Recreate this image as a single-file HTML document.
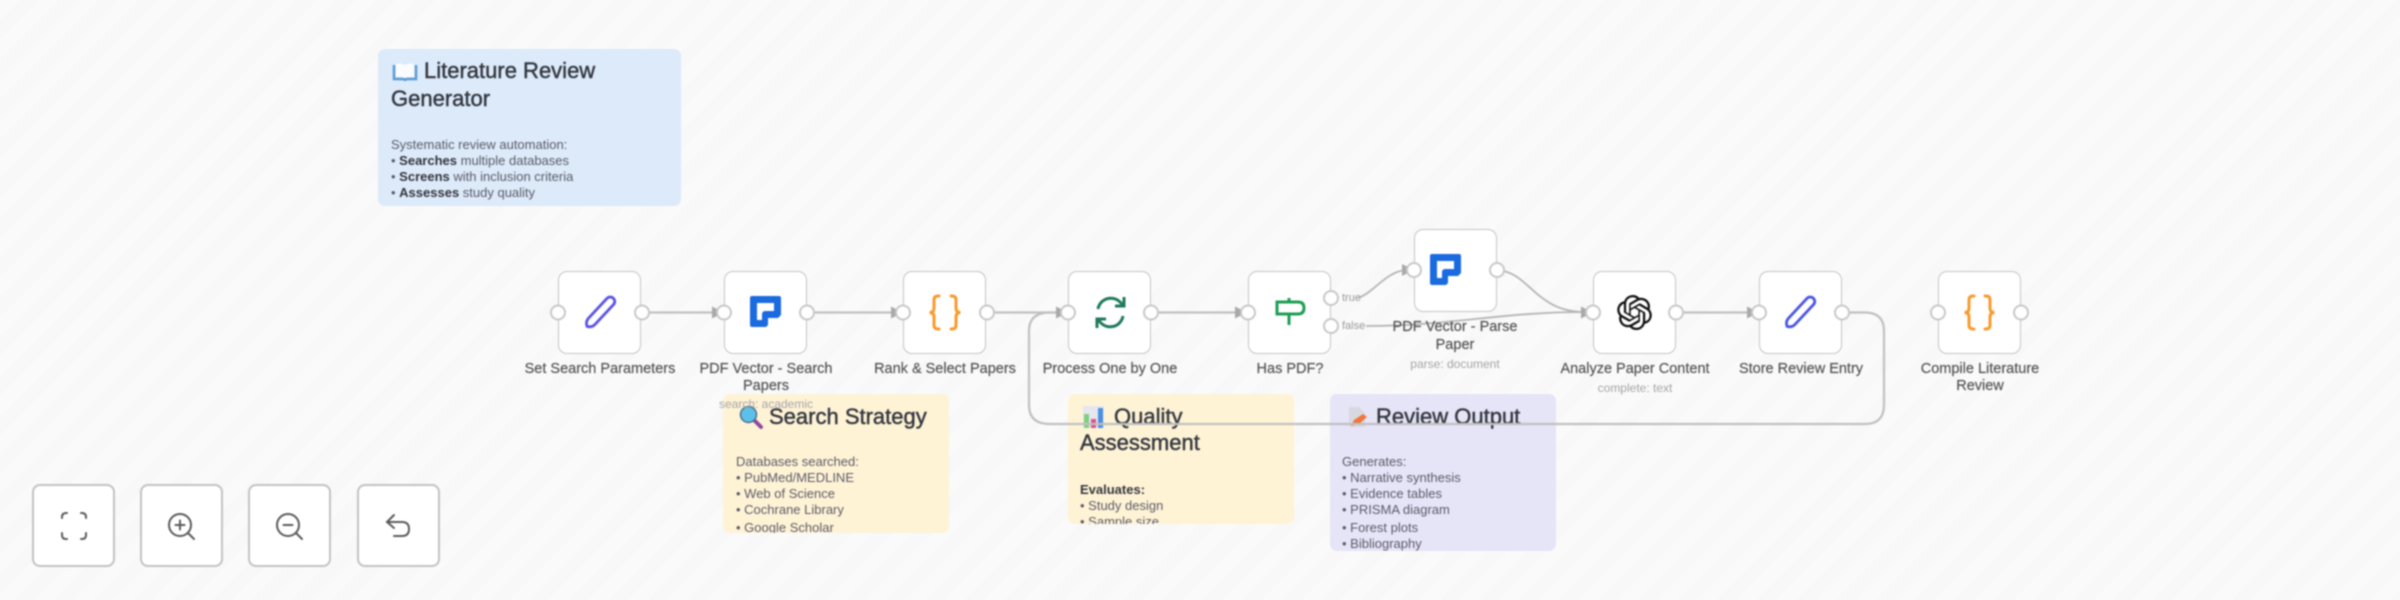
<!DOCTYPE html>
<html><head><meta charset="utf-8"><style>
html,body{margin:0;padding:0;width:2400px;height:600px;overflow:hidden;background:#f9f9f9}
#r{position:absolute;left:0;top:0;width:2400px;height:600px;overflow:hidden;font-family:"Liberation Sans",sans-serif;filter:blur(.8px);background:repeating-linear-gradient(135deg,#fafafa 0 14px,#f8f8f8 14px 28px)}
.s{position:absolute;border-radius:7px;overflow:hidden}
.s div{position:absolute;white-space:nowrap}
.t{font-size:22px;line-height:28px;color:#33373f;font-weight:500;-webkit-text-stroke:.45px #33373f}
.b{font-size:13px;line-height:16px;color:#5a5a66}
.b b{color:#33333c}
.n{position:absolute;width:81px;height:81px;background:#fff;border:1.5px solid #c4c4c4;border-radius:9px;box-sizing:content-box}
.l{position:absolute;width:170px;text-align:center;font-size:14.5px;line-height:17px;color:#555;-webkit-text-stroke:.2px #555}
.u{position:absolute;width:170px;text-align:center;font-size:12px;line-height:14px;color:#a5a5a5}
.f{position:absolute;font-size:11px;line-height:12px;color:#999}
.c{position:absolute;width:83px;height:83px;box-sizing:border-box;background:#fff;border:2px solid #c2c2c2;border-radius:8px}
svg{position:absolute;overflow:visible}
</style></head><body><div id="r">
<div class="s" style="left:378px;top:49px;width:303px;height:157px;background:#dceafa">
<svg style="left:15px;top:13px" width="24" height="20" viewBox="0 0 24 20"><path d="M1 3v14h9q2 0 2 2 0-2 2-2h9V3" fill="none" stroke="#5b9bd5" stroke-width="2.500"/><path d="M3 2q5-1 9 1 4-2 9-1v13q-5-1-9 1-4-2-9-1z" fill="#fbfcff"/></svg>
<div class="t" style="left:46px;top:8px">Literature Review</div>
<div class="t" style="left:13px;top:36px">Generator</div>
<div class="b" style="left:13px;top:88px">Systematic review automation:</div>
<div class="b" style="left:13px;top:104px">• <b>Searches</b> multiple databases</div>
<div class="b" style="left:13px;top:120px">• <b>Screens</b> with inclusion criteria</div>
<div class="b" style="left:13px;top:136px">• <b>Assesses</b> study quality</div>
</div>
<div class="s" style="left:723px;top:394px;width:226px;height:139px;background:#fff3d6">
<svg style="left:16px;top:11px" width="24" height="24" viewBox="0 0 24 24"><path d="M15 15l7 7" stroke="#8e4a9e" stroke-width="4" stroke-linecap="round"/><circle cx="9.500" cy="9.500" r="8" fill="#5cc0e8" stroke="#4a6f8f" stroke-width="1.500"/></svg>
<div class="t" style="left:46px;top:9px">Search Strategy</div>
<div class="b" style="left:13px;top:60px">Databases searched:</div>
<div class="b" style="left:13px;top:76px">• PubMed/MEDLINE</div>
<div class="b" style="left:13px;top:92px">• Web of Science</div>
<div class="b" style="left:13px;top:108px">• Cochrane Library</div>
<div class="b" style="left:13px;top:126px">• Google Scholar</div>
</div>
<div class="s" style="left:1068px;top:394px;width:226px;height:130px;background:#fff3d6">
<svg style="left:15px;top:12px" width="21" height="22" viewBox="0 0 21 22"><rect width="21" height="22" fill="#e6e6ee"/><rect x="1" y="8" width="5" height="14" fill="#7ed07e"/><rect x="8" y="13" width="5" height="9" fill="#e0508c"/><rect x="15" y="2" width="5" height="20" fill="#4a90e2"/></svg>
<div class="t" style="left:46px;top:9px">Quality</div>
<div class="t" style="left:12px;top:35px">Assessment</div>
<div class="b" style="left:12px;top:88px"><b>Evaluates:</b></div>
<div class="b" style="left:12px;top:104px">• Study design</div>
<div class="b" style="left:12px;top:120px">• Sample size</div>
</div>
<div class="s" style="left:1330px;top:394px;width:226px;height:157px;background:#e6e4f7">
<svg style="left:18px;top:12px" width="20" height="22" viewBox="0 0 20 22"><path d="M1 1h10l6 6v14H1z" fill="#d9d8e2"/><path d="M3 20l3-6 9-6 4 3-8 7z" fill="#f0763a"/></svg>
<div class="t" style="left:46px;top:9px">Review Output</div>
<div class="b" style="left:12px;top:60px">Generates:</div>
<div class="b" style="left:12px;top:76px">• Narrative synthesis</div>
<div class="b" style="left:12px;top:92px">• Evidence tables</div>
<div class="b" style="left:12px;top:108px">• PRISMA diagram</div>
<div class="b" style="left:12px;top:126px">• Forest plots</div>
<div class="b" style="left:12px;top:142px">• Bibliography</div>
</div>

<svg style="left:0;top:0" width="2400" height="600" viewBox="0 0 2400 600" fill="none">
<g stroke="#c0c0c0" stroke-width="2.200">
<path d="M642 312.500H716"/><path d="M808 312.500H895"/><path d="M987 312.500H1060"/><path d="M1151 312.500H1240"/><path d="M1680 312.500H1752"/>
<path d="M1842 312.500H1865Q1884 312.500 1884 331V405Q1884 424 1865 424H1050Q1029 424 1029 405V331Q1029 312.500 1050 312.500H1060"/>
</g>
<g stroke="#b5b5b5" stroke-width="1.800">
<path d="M1358 298C1375 292 1385 272 1406 270"/>
<path d="M1497 270C1530 272 1535 312 1585 312"/>
<path d="M1366 326C1450 326 1500 312 1585 312"/>
</g>
<g fill="#a9a9a9"><path d="M724 312.500l-12-6v12z"/><path d="M903 312.500l-12-6v12z"/><path d="M1068 312.500l-12-6v12z"/><path d="M1247 312.500l-12-6v12z"/><path d="M1414 270l-12-6v12z"/><path d="M1593 312.500l-12-6v12z"/><path d="M1759 312.500l-12-6v12z"/></g>
</svg>

<div class="n" style="left:558px;top:271px"></div>
<div class="n" style="left:724px;top:271px"></div>
<div class="n" style="left:903px;top:271px"></div>
<div class="n" style="left:1068px;top:271px"></div>
<div class="n" style="left:1248px;top:271px"></div>
<div class="n" style="left:1414px;top:229px"></div>
<div class="n" style="left:1593px;top:271px"></div>
<div class="n" style="left:1759px;top:271px"></div>
<div class="n" style="left:1938px;top:271px"></div>

<svg style="left:0;top:0" width="2400" height="600" viewBox="0 0 2400 600" fill="none">
<g fill="#fff" stroke="#c8c8c8" stroke-width="2">
<circle cx="558" cy="312.500" r="7"/><circle cx="642" cy="312.500" r="7"/>
<circle cx="724" cy="312.500" r="7"/><circle cx="807" cy="312.500" r="7"/>
<circle cx="903" cy="312.500" r="7"/><circle cx="987" cy="312.500" r="7"/>
<circle cx="1068" cy="312.500" r="7"/><circle cx="1151" cy="312.500" r="7"/>
<circle cx="1248" cy="312.500" r="7"/><circle cx="1331" cy="298" r="7"/><circle cx="1331" cy="326" r="7"/>
<circle cx="1414" cy="270" r="7"/><circle cx="1497" cy="270" r="7"/>
<circle cx="1593" cy="312.500" r="7"/><circle cx="1676" cy="312.500" r="7"/>
<circle cx="1759" cy="312.500" r="7"/><circle cx="1842" cy="312.500" r="7"/>
<circle cx="1938" cy="312.500" r="7"/><circle cx="2021" cy="312.500" r="7"/>
</g>
<path d="M-19 0C-17-4-14-4.500-12-4.500H15a4.500 4.500 0 0 1 0 9H-12C-14 4.500-17 4-19 0Z" transform="translate(600 312.500) rotate(-47)" stroke="#5a52e6" stroke-width="2.800"/>
<path d="M-19 0C-17-4-14-4.500-12-4.500H15a4.500 4.500 0 0 1 0 9H-12C-14 4.500-17 4-19 0Z" transform="translate(1800 312.500) rotate(-47)" stroke="#4a55e4" stroke-width="2.800"/>
<g fill="#1a6ae0" fill-rule="evenodd">
<path id="v" d="M752 296H779a2 2 0 0 1 2 2V315l-3 3H768V325l-2 2H752a2 2 0 0 1-2-2V298a2 2 0 0 1 2-2ZM757 303V320H762V314a3 3 0 0 1 3-3H774V303Z"/>
<path d="M1432 254H1459a2 2 0 0 1 2 2V273l-3 3H1448V283l-2 2H1432a2 2 0 0 1-2-2V256a2 2 0 0 1 2-2ZM1437 261V278H1442V272a3 3 0 0 1 3-3H1454V261Z"/>
</g>
<g stroke="#f99a2c" stroke-width="3" stroke-linecap="round">
<path d="M939 296h-1q-4 0-4 4v8q0 4.500-4.500 4.500 4.500 0 4.500 4.500v8q0 4 4 4h1"/><path d="M951 296h1q4 0 4 4v8q0 4.500 4.500 4.500-4.500 0-4.500 4.500v8q0 4-4 4h-1"/>
<path d="M1974 296h-1q-4 0-4 4v8q0 4.500-4.500 4.500 4.500 0 4.500 4.500v8q0 4 4 4h1"/><path d="M1985 296h1q4 0 4 4v8q0 4.500 4.500 4.500-4.500 0-4.500 4.500v8q0 4-4 4h-1"/>
</g>
<g stroke="#1f7a5c" stroke-width="3">
<path d="M1098 309a13 13 0 0 1 22-7l4 4"/><path d="M1124 297v9h-9"/>
<path d="M1123 316a13 13 0 0 1-22 7l-4-4"/><path d="M1097 328v-9h9"/>
</g>
<g stroke="#1f9d55" stroke-width="3">
<path d="M1277 302h21q6 0 6 6t-6 6h-21z"/><path d="M1289 302v-4M1289 314v11"/>
</g>
<path transform="translate(1617 295) scale(1.46)" fill="#111" d="M22.2819 9.8211a5.9847 5.9847 0 0 0-.5157-4.9108 6.0462 6.0462 0 0 0-6.5098-2.9A6.0651 6.0651 0 0 0 4.9807 4.1818a5.9847 5.9847 0 0 0-3.9977 2.9 6.0462 6.0462 0 0 0 .7427 7.0966 5.98 5.98 0 0 0 .511 4.9107 6.051 6.051 0 0 0 6.5146 2.9001A5.9847 5.9847 0 0 0 13.2599 24a6.0557 6.0557 0 0 0 5.7718-4.2058 5.9894 5.9894 0 0 0 3.9977-2.9001 6.0557 6.0557 0 0 0-.7475-7.0729zm-9.022 12.6081a4.4755 4.4755 0 0 1-2.8764-1.0408l.1419-.0804 4.7783-2.7582a.7948.7948 0 0 0 .3927-.6813v-6.7369l2.02 1.1686a.071.071 0 0 1 .038.052v5.5826a4.504 4.504 0 0 1-4.4945 4.4944zm-9.6607-4.1254a4.4708 4.4708 0 0 1-.5346-3.0137l.142.0852 4.783 2.7582a.7712.7712 0 0 0 .7806 0l5.8428-3.3685v2.3324a.0804.0804 0 0 1-.0332.0615L9.74 19.9502a4.4992 4.4992 0 0 1-6.1408-1.6464zM2.3408 7.8956a4.485 4.485 0 0 1 2.3655-1.9728V11.6a.7664.7664 0 0 0 .3879.6765l5.8144 3.3543-2.0201 1.1685a.0757.0757 0 0 1-.071 0l-4.8303-2.7865A4.504 4.504 0 0 1 2.3408 7.872zm16.5963 3.8558L13.1038 8.364 15.1192 7.2a.0757.0757 0 0 1 .071 0l4.8303 2.7913a4.4944 4.4944 0 0 1-.6765 8.1042v-5.6772a.79.79 0 0 0-.407-.667zm2.0107-3.0231l-.142-.0852-4.7735-2.7818a.7759.7759 0 0 0-.7854 0L9.409 9.2297V6.8974a.0662.0662 0 0 1 .0284-.0615l4.8303-2.7866a4.4992 4.4992 0 0 1 6.6802 4.66zM8.3065 12.863l-2.02-1.1638a.0804.0804 0 0 1-.038-.0567V6.0742a4.4992 4.4992 0 0 1 7.3757-3.4537l-.142.0805L8.704 5.459a.7948.7948 0 0 0-.3927.6813zm1.0976-2.3654l2.602-1.4998 2.6069 1.4998v2.9994l-2.5974 1.4997-2.6067-1.4997Z"/>
</svg>

<div class="f" style="left:1342px;top:292px">true</div>
<div class="f" style="left:1342px;top:320px">false</div>

<div class="l" style="left:515px;top:361px">Set Search Parameters</div>
<div class="l" style="left:681px;top:361px">PDF Vector - Search<br>Papers</div>
<div class="l" style="left:860px;top:361px">Rank &amp; Select Papers</div>
<div class="l" style="left:1025px;top:361px">Process One by One</div>
<div class="l" style="left:1205px;top:361px">Has PDF?</div>
<div class="l" style="left:1370px;top:318px;line-height:18px">PDF Vector - Parse<br>Paper</div>
<div class="l" style="left:1550px;top:361px">Analyze Paper Content</div>
<div class="l" style="left:1716px;top:361px">Store Review Entry</div>
<div class="l" style="left:1895px;top:361px">Compile Literature<br>Review</div>
<div class="u" style="left:681px;top:397px">search: academic</div>
<div class="u" style="left:1370px;top:357px">parse: document</div>
<div class="u" style="left:1550px;top:381px">complete: text</div>

<div class="c" style="left:32px;top:484px"></div>
<div class="c" style="left:140px;top:484px"></div>
<div class="c" style="left:248px;top:484px"></div>
<div class="c" style="left:357px;top:484px"></div>
<svg style="left:0;top:0" width="2400" height="600" viewBox="0 0 2400 600" fill="none" stroke="#5a5a5a" stroke-width="2" stroke-linecap="round">
<path d="M62 518v-1q0-4 4-4h1M81 513h1q4 0 4 4v1M86 533v2q0 4-4 4h-1M67 539h-1q-4 0-4-4v-2"/>
<circle cx="180" cy="525" r="11"/><path d="M188 533l6 6M175.500 525h9M180 520.500v9"/>
<circle cx="288" cy="525" r="11"/><path d="M296 533l6 6M283.500 525h9"/>
<path d="M394 515l-7 7 7 6M387 522h15q7 0 7 7t-7 7h-8"/>
</svg>
</div></body></html>
